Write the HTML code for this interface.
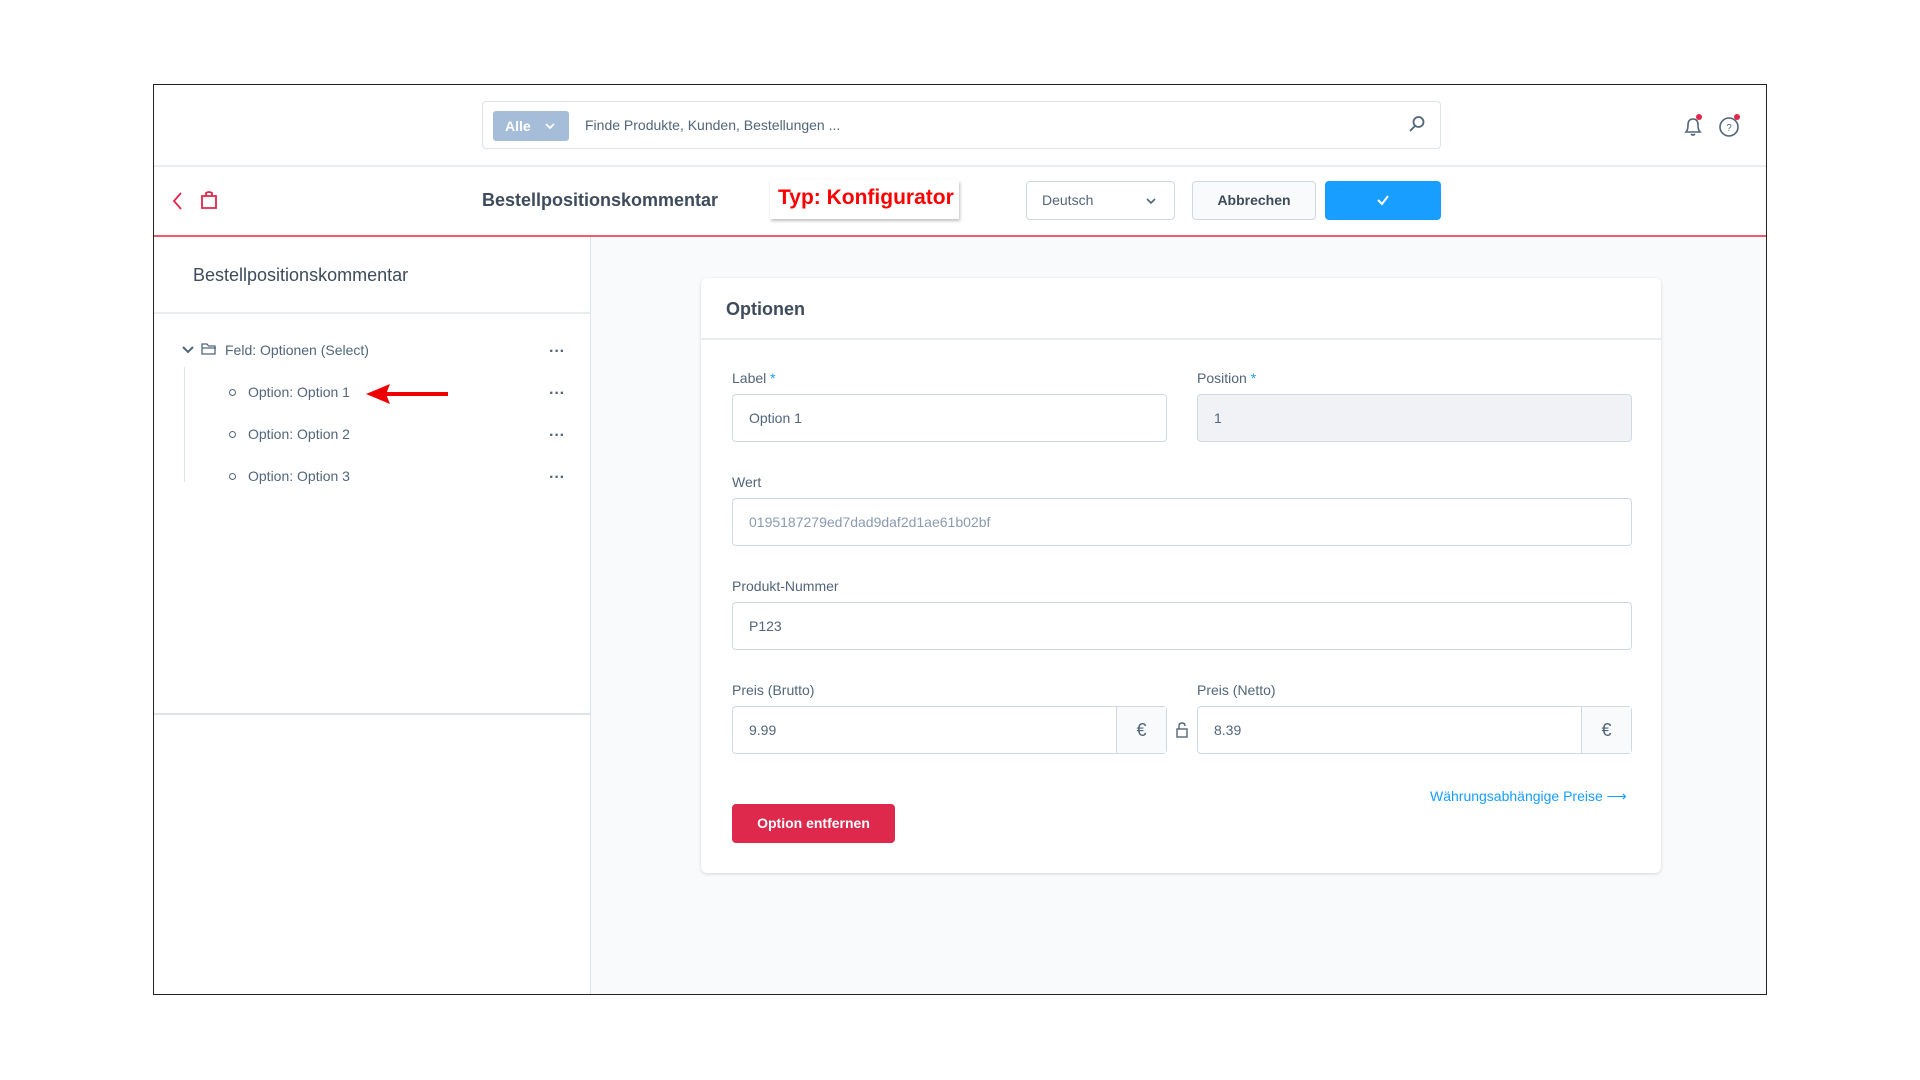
<!DOCTYPE html>
<html><head><meta charset="utf-8"><style>
*{box-sizing:border-box;margin:0;padding:0}
body{width:1920px;height:1080px;background:#fff;font-family:"Liberation Sans",sans-serif;color:#52667a;position:relative;overflow:hidden}
.a{position:absolute}
.frame{left:153px;top:84px;width:1614px;height:911px;border:1.5px solid #222;background:#fff;overflow:hidden}
.inp{position:absolute;border:1px solid #d1d9e0;border-radius:4px;background:#fff;font-size:14px;color:#52667a;padding-left:16px;display:flex;align-items:center}
.lbl{position:absolute;font-size:14px;color:#52667a}
.lbl b{color:#189eff;font-weight:normal}
.dots{position:absolute;font-size:16px;color:#52667a;font-weight:bold}
.opt{position:absolute;font-size:14px;color:#52667a}
.circ{position:absolute;width:7px;height:7px;border:1.5px solid #52667a;border-radius:50%}
</style></head><body>
<div class="a frame">
 <div class="a" style="left:0;top:80px;width:1614px;height:2px;background:#e9edf0"></div>
 <div class="a" style="left:328px;top:16px;width:959px;height:48px;border:1px solid #dde3e8;border-radius:4px;background:#fff"></div>
 <div class="a" style="left:339px;top:26px;width:76px;height:30px;background:#a5bdd8;border-radius:3px;color:#fff;font-size:14px;font-weight:bold;line-height:30px;padding-left:12px">Alle<svg style="position:absolute;left:52px;top:11px" width="10" height="8" viewBox="0 0 10 8"><path d="M1 2 L5 6 L9 2" fill="none" stroke="#fff" stroke-width="1.8"/></svg></div>
 <div class="a" style="left:431px;top:32px;font-size:14px;color:#52667a">Finde Produkte, Kunden, Bestellungen ...</div>
 <svg class="a" style="left:1254px;top:30px" width="18" height="18" viewBox="0 0 18 18"><circle cx="10.5" cy="7" r="5" fill="none" stroke="#52667a" stroke-width="1.8"/><path d="M7 11 L2 16" stroke="#52667a" stroke-width="1.8"/></svg>
 <svg class="a" style="left:1526px;top:28px" width="26" height="26" viewBox="0 0 26 26"><path d="M6 19 Q8 17 8 12 Q8 6 13 6 Q18 6 18 12 Q18 17 20 19 Z" fill="none" stroke="#52667a" stroke-width="1.6"/><path d="M11 21 Q13 23 15 21" fill="none" stroke="#52667a" stroke-width="1.6"/><circle cx="19" cy="4" r="3" fill="#e3254b"/></svg>
 <svg class="a" style="left:1563px;top:28px" width="26" height="26" viewBox="0 0 26 26"><circle cx="12" cy="14" r="9" fill="none" stroke="#52667a" stroke-width="1.6"/><text x="12" y="18" font-size="10" text-anchor="middle" fill="#52667a" font-family="Liberation Sans">?</text><circle cx="20" cy="4" r="3" fill="#e3254b"/></svg>
 <svg class="a" style="left:17px;top:106px" width="14" height="20" viewBox="0 0 14 20"><path d="M10 2 L3 10 L10 18" fill="none" stroke="#e3254b" stroke-width="1.8"/></svg>
 <svg class="a" style="left:46px;top:105px" width="18" height="20" viewBox="0 0 18 20"><path d="M2 6 H16 V18 H2 Z M6 6 V3 Q9 1 12 3 V6" fill="none" stroke="#e3254b" stroke-width="1.8"/></svg>
 <div class="a" style="left:328px;top:105px;font-size:18px;font-weight:bold;color:#3d4b5a">Bestellpositionskommentar</div>
 <div class="a" style="left:616px;top:95px;width:189px;height:39px;background:#fff;box-shadow:1px 2px 3px rgba(0,0,0,.25);color:#f00;font-size:21px;font-weight:bold;line-height:36px;padding-left:8px">Typ: Konfigurator</div>
 <div class="a" style="left:872px;top:96px;width:149px;height:39px;border:1px solid #d1d9e0;border-radius:4px;font-size:14px;line-height:37px;padding-left:15px">Deutsch<svg style="position:absolute;right:18px;top:15px" width="10" height="8" viewBox="0 0 10 8"><path d="M1 2 L5 6 L9 2" fill="none" stroke="#52667a" stroke-width="1.6"/></svg></div>
 <div class="a" style="left:1038px;top:96px;width:124px;height:39px;border:1px solid #d1d9e0;border-radius:4px;background:#f9fafb;font-size:14px;font-weight:bold;color:#3d4b5a;line-height:37px;text-align:center">Abbrechen</div>
 <div class="a" style="left:1171px;top:96px;width:116px;height:39px;border-radius:4px;background:#189eff"><svg style="position:absolute;left:50px;top:12px" width="16" height="14" viewBox="0 0 16 14"><path d="M3 7 L7 11 L13 3" fill="none" stroke="#fff" stroke-width="2"/></svg></div>
 <div class="a" style="left:0;top:150px;width:1614px;height:2px;background:#f05a70"></div>
 <div class="a" style="left:437px;top:152px;width:1177px;height:760px;background:#f9fafb"></div>
 <div class="a" style="left:0;top:152px;width:437px;height:760px;background:#fff;border-right:1.5px solid #dde3e8"></div>
 <div class="a" style="left:0;top:628px;width:437px;height:1.5px;background:#dde3e8"></div>
 <div class="a" style="left:39px;top:180px;font-size:18px;color:#3d4b5a">Bestellpositionskommentar</div>
 <div class="a" style="left:0;top:227px;width:437px;height:2px;background:#e9edf0"></div>
 <svg class="a" style="left:28px;top:260px" width="12" height="10" viewBox="0 0 12 10"><path d="M1 2 L6 7 L11 2" fill="none" stroke="#52667a" stroke-width="2"/></svg>
 <svg class="a" style="left:47px;top:257px" width="16" height="14" viewBox="0 0 16 14"><path d="M1 2 H6 L7.5 4 H14 V12 H1 Z M1 6 H15" fill="none" stroke="#52667a" stroke-width="1.3"/></svg>
 <div class="opt" style="left:71px;top:257px">Feld: Optionen (Select)</div>
 <div class="a" style="left:30px;top:282px;width:1px;height:115px;background:#dde3e8"></div>
 <div class="circ" style="left:75px;top:304px"></div><div class="opt" style="left:94px;top:299px">Option: Option 1</div>
 <svg class="a" style="left:208px;top:297px" width="90" height="24" viewBox="0 0 90 24"><path d="M86 12 H24" stroke="#e00" stroke-width="4"/><path d="M4 12 L28 2 L24 12 L28 22 Z" fill="#e00"/></svg>
 <div class="circ" style="left:75px;top:346px"></div><div class="opt" style="left:94px;top:341px">Option: Option 2</div>
 <div class="circ" style="left:75px;top:388px"></div><div class="opt" style="left:94px;top:383px">Option: Option 3</div>
 <div class="dots" style="left:395px;top:258px">···</div>
 <div class="dots" style="left:395px;top:300px">···</div>
 <div class="dots" style="left:395px;top:342px">···</div>
 <div class="dots" style="left:395px;top:384px">···</div>
 <div class="a" style="left:547px;top:193px;width:960px;height:595px;background:#fff;border-radius:6px;box-shadow:0 1px 3px rgba(0,0,0,.15)"></div>
 <div class="a" style="left:572px;top:214px;font-size:18px;font-weight:bold;color:#3d4b5a">Optionen</div>
 <div class="a" style="left:547px;top:253px;width:960px;height:2px;background:#e9edf0"></div>
 <div class="lbl" style="left:578px;top:285px">Label <b>*</b></div>
 <div class="inp" style="left:578px;top:309px;width:435px;height:48px">Option 1</div>
 <div class="lbl" style="left:1043px;top:285px">Position <b>*</b></div>
 <div class="inp" style="left:1043px;top:309px;width:435px;height:48px;background:#f0f2f5">1</div>
 <div class="lbl" style="left:578px;top:389px">Wert</div>
 <div class="inp" style="left:578px;top:413px;width:900px;height:48px;color:#8a9bb0">0195187279ed7dad9daf2d1ae61b02bf</div>
 <div class="lbl" style="left:578px;top:493px">Produkt-Nummer</div>
 <div class="inp" style="left:578px;top:517px;width:900px;height:48px">P123</div>
 <div class="lbl" style="left:578px;top:597px">Preis (Brutto)</div>
 <div class="inp" style="left:578px;top:621px;width:435px;height:48px">9.99<div style="position:absolute;right:0;top:0;width:50px;height:46px;border-left:1px solid #d1d9e0;background:#f9fafb;text-align:center;line-height:46px;font-size:18px">€</div></div>
 <svg class="a" style="left:1021px;top:636px" width="14" height="18" viewBox="0 0 14 18"><rect x="2" y="8" width="10" height="8" fill="none" stroke="#52667a" stroke-width="1.4"/><path d="M4 8 V5 Q4 2 7 2 Q10 2 10 5" fill="none" stroke="#52667a" stroke-width="1.4"/></svg>
 <div class="lbl" style="left:1043px;top:597px">Preis (Netto)</div>
 <div class="inp" style="left:1043px;top:621px;width:435px;height:48px">8.39<div style="position:absolute;right:0;top:0;width:50px;height:46px;border-left:1px solid #d1d9e0;background:#f9fafb;text-align:center;line-height:46px;font-size:18px">€</div></div>
 <div class="a" style="left:1276px;top:703px;font-size:14px;color:#189eff">Währungsabhängige Preise &#10230;</div>
 <div class="a" style="left:578px;top:719px;width:163px;height:39px;background:#de294c;border-radius:4px;color:#fff;font-size:14px;font-weight:bold;line-height:39px;text-align:center">Option entfernen</div>
</div>
</body></html>
